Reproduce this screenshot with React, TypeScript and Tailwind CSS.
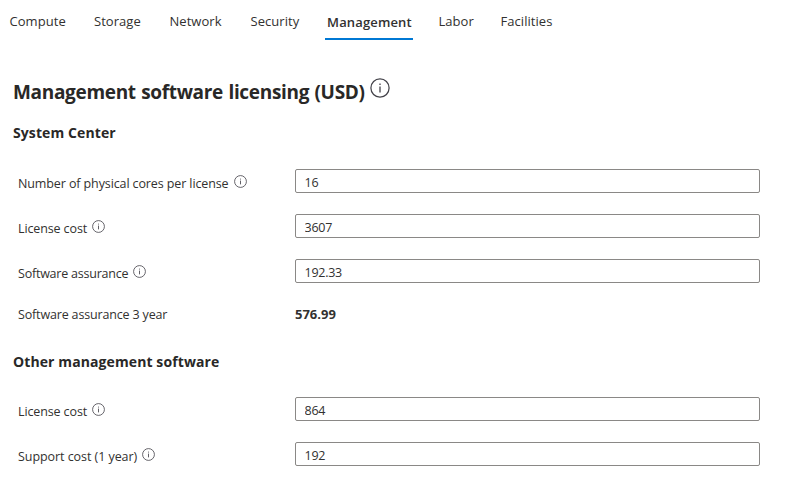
import React from "react";

const tabs = [
  { name: "Compute", box: "w-[84.5px]", track: "tracking-[0.05px]" },
  { name: "Storage", box: "w-[75.5px]", track: "tracking-[0.05px]" },
  { name: "Network", box: "w-[81px]", track: "tracking-[0.05px]" },
  { name: "Security", box: "w-[75px]", track: "tracking-[0.05px]" },
  { name: "Management", box: "w-[113px]", track: "tracking-[0.15px]", active: true },
  { name: "Labor", box: "w-[62px]", track: "tracking-[0.05px]" },
  { name: "Facilities", box: "w-[60px]", track: "tracking-[0.05px]" },
];

function Info({ size }: { size: string }) {
  return (
    <svg viewBox="0 0 20 20" className={`${size} shrink-0`} fill="none">
      <circle cx="10" cy="10" r="9.1" stroke="#44434a" strokeWidth="1.25" />
      <path d="M10 8.6V14.4M10 5.6V7" stroke="#44434a" strokeWidth="1.3" />
    </svg>
  );
}

function Row({ label, track, value }: { label: string; track: string; value: string }) {
  return (
    <div className="flex h-[45px] items-start">
      <div className="flex w-[282px] items-start gap-[5px] pl-[5px]">
        <span className={`pt-[6px] text-[12.5px] leading-[18px] ${track}`}>{label}</span>
        <Info size="mt-[5.5px] size-[13px]" />
      </div>
      <input
        defaultValue={value}
        className="h-6 w-[465px] rounded-[2px] border border-[#8a8886] bg-white px-[8.5px] pt-[2px] text-[12.5px] tracking-[-0.25px] outline-none"
      />
    </div>
  );
}

export default function App() {
  return (
    <main className="h-[479px] w-[796px] overflow-hidden bg-white font-['Open_Sans','Noto_Sans',sans-serif] text-[13px] text-[#323130]">
      <nav className="flex h-[40px] pl-[9.5px]">
        {tabs.map((t) => (
          <div key={t.name} className={`${t.box} shrink-0 whitespace-nowrap pt-[12px] leading-[18px]`}>
            {t.active ? (
              <div className="-mt-[12px] -ml-[0.5px] h-[40px] w-[88px] border-b-2 border-[#0078d4] pt-[13px] pl-[2px] font-semibold">
                <span className={t.track}>{t.name}</span>
              </div>
            ) : (
              <span className={t.track}>{t.name}</span>
            )}
          </div>
        ))}
      </nav>
      <section className="pl-[13px]">
        <h1 className="flex h-[70px] items-start gap-[5px] pt-[38px] text-[19px] leading-7 font-bold text-[#292827]">
          <span className="tracking-[-0.32px] [word-spacing:0.8px]">Management software licensing (USD)</span>
          <Info size="size-[20px]" />
        </h1>
        <h2 className="h-[59px] pt-[13px] text-[14px] leading-5 font-bold text-[#292827]">
          <span className="tracking-[0.1px]">System Center</span>
        </h2>
        <Row label="Number of physical cores per license" track="tracking-[-0.11px]" value="16" />
        <Row label="License cost" track="tracking-[-0.12px]" value="3607" />
        <Row label="Software assurance" track="tracking-[-0.22px]" value="192.33" />
        <div className="flex h-[48px] pt-[1px] leading-[18px]">
          <span className="w-[282px] pt-px pl-[5px] text-[12.5px] tracking-[-0.16px]">Software assurance 3 year</span>
          <span className="font-bold">576.99</span>
        </div>
        <h2 className="h-[45px] text-[14px] leading-5 font-bold text-[#292827]">
          <span className="tracking-[0.1px]">Other management software</span>
        </h2>
        <Row label="License cost" track="tracking-[-0.12px]" value="864" />
        <Row label="Support cost (1 year)" track="tracking-[-0.06px]" value="192" />
      </section>
    </main>
  );
}
